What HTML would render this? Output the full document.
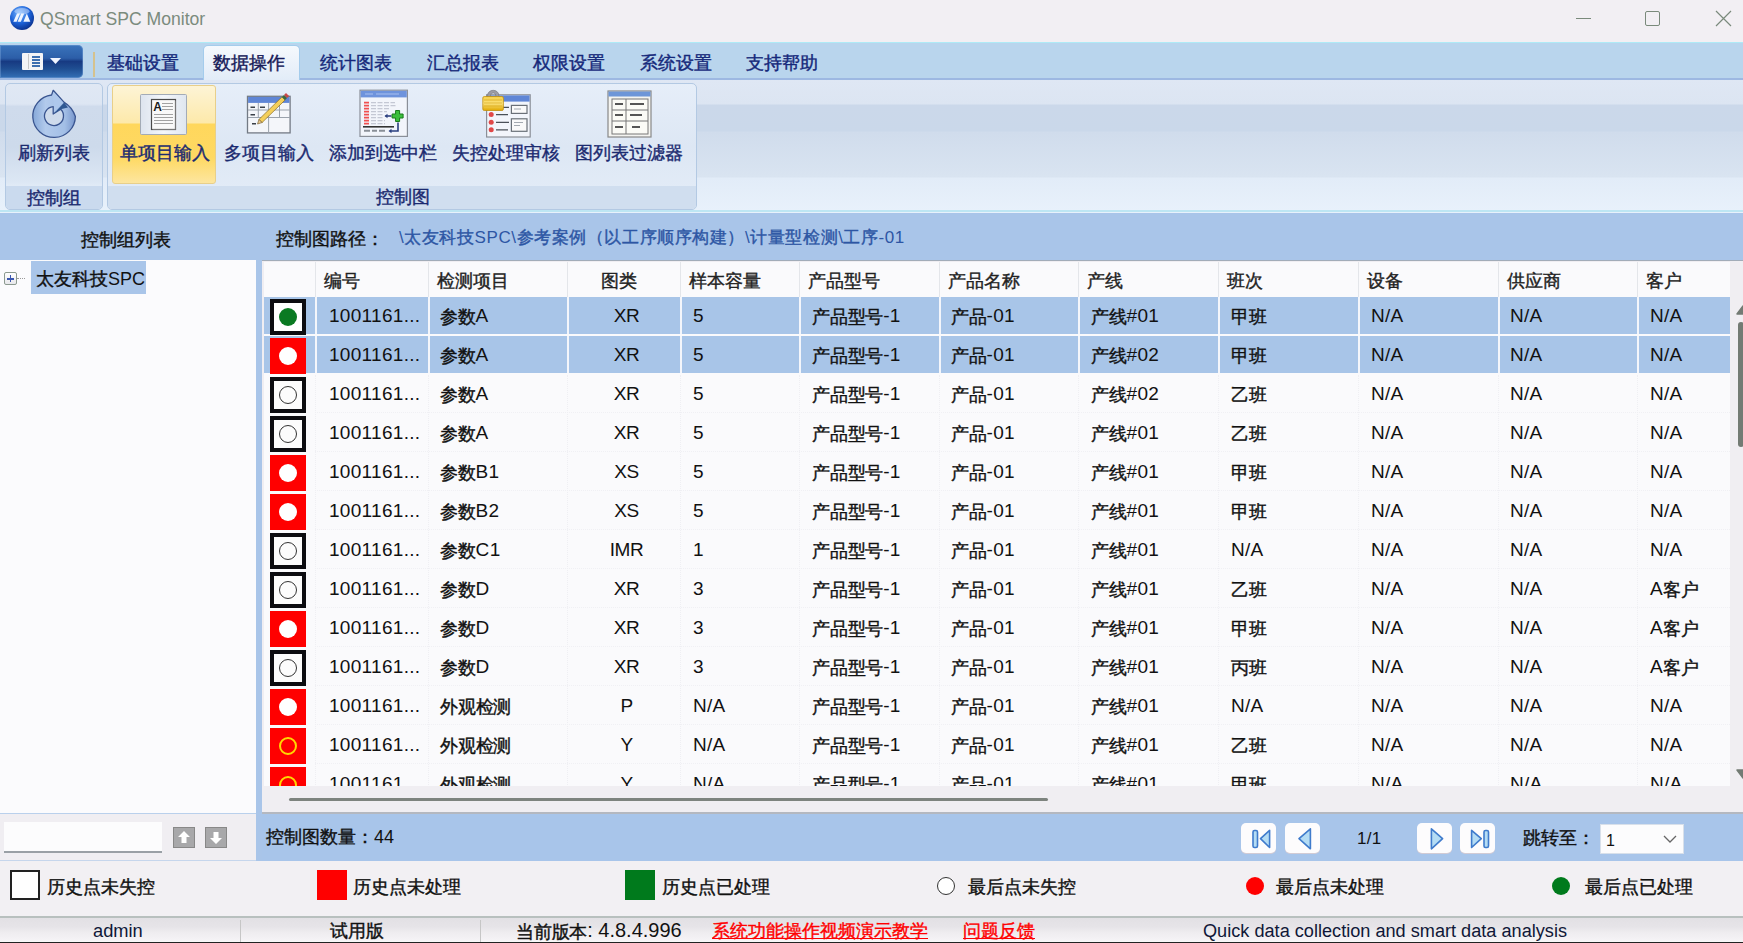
<!DOCTYPE html>
<html><head><meta charset="utf-8">
<style>
*{box-sizing:border-box;margin:0;padding:0}
html,body{width:1743px;height:943px;overflow:hidden;background:#f1eef2;font-family:"Liberation Sans",sans-serif;color:#111}
.a{position:absolute}
.t{position:absolute;white-space:nowrap;line-height:1}
.tab{font-size:18px;color:#15287a}
.rb{font-size:18px;color:#1b2a70;font-weight:500}
.cj{font-weight:500}
.gc{font-size:19px;color:#111;font-weight:500;letter-spacing:0.3px}
.gh{font-size:18px;color:#222;font-weight:500}
.c{-webkit-text-stroke:0.4px currentColor}
.gc .c{font-size:18px;letter-spacing:-0.2px;position:relative;top:1px}
</style></head><body>
<div class="a" style="left:0;top:0;width:1743px;height:42px;background:#f2eff3"></div>
<svg class="a" style="left:10px;top:6px" width="24" height="24" viewBox="0 0 24 24">
<defs><radialGradient id="gb" cx="0.4" cy="0.3" r="0.75"><stop offset="0" stop-color="#7ab8ff"/><stop offset="0.55" stop-color="#1d62d8"/><stop offset="1" stop-color="#0a2c86"/></radialGradient></defs>
<circle cx="12" cy="12" r="12" fill="url(#gb)"/>
<ellipse cx="12" cy="5.2" rx="7.5" ry="3.2" fill="#dfeaff" opacity="0.45"/>
<path d="M3.3 15.8 L6.6 15.8 L10 7.5 L7 7.5Z M7.6 15.8 L10.9 15.8 L14.2 7.5 L11.2 7.5Z M13.4 15.8 L20.3 15.8 L16.8 7.5Z" fill="#eef4ff"/>
</svg>
<div class="t" style="left:40px;top:11px;font-size:17.6px;color:#7b8b7d">QSmart SPC Monitor</div>
<div class="a" style="left:1576px;top:18px;width:15px;height:1px;background:#7a8a7b"></div>
<div class="a" style="left:1645px;top:11px;width:15px;height:15px;border:1.3px solid #7a8a7b;border-radius:2px"></div>
<svg class="a" style="left:1715px;top:10px" width="17" height="17"><path d="M1 1L16 16M16 1L1 16" stroke="#7a8a7b" stroke-width="1.2"/></svg>
<div class="a" style="left:0;top:42px;width:1743px;height:38px;background:#b9d5ed;border-top:1px solid #aeeaf6;border-bottom:2px solid #9db8e2"></div>
<div class="a" style="left:0;top:45px;width:83px;height:33px;background:linear-gradient(#3a74bc 0,#2c5ea8 40%,#173a82 50%,#1f4e92 72%,#3470b6 100%);border-radius:0 5px 5px 0;box-shadow:inset 0 0 0 1px rgba(140,180,230,0.35)"></div>
<div class="a" style="left:22px;top:53px;width:21px;height:17px;background:#f4f4f6;border-radius:1px"></div>
<div class="a" style="left:28px;top:54px;width:1px;height:15px;background:#c8c8c8"></div>
<div class="a" style="left:32px;top:56px;width:8px;height:11px;background:repeating-linear-gradient(#3d6fb0 0 1.5px,transparent 1.5px 3px)"></div>
<svg class="a" style="left:50px;top:58px" width="11" height="7"><path d="M0 0H11L5.5 6Z" fill="#f0f4ff"/></svg>
<div class="a" style="left:93px;top:52px;width:2px;height:25px;background:#d5c28e"></div>
<div class="a" style="left:203px;top:45px;width:97px;height:35px;background:linear-gradient(#f5f9fd,#e2ecf8);border:1.5px solid #a4ccec;border-bottom:none;border-radius:5px 5px 0 0"></div>
<div class="t tab cj" style="left:107px;top:54px"><span class="c">基础设置</span></div>
<div class="t tab cj" style="left:213px;top:54px;color:#161a58"><span class="c">数据操作</span></div>
<div class="t tab cj" style="left:320px;top:54px"><span class="c">统计图表</span></div>
<div class="t tab cj" style="left:427px;top:54px"><span class="c">汇总报表</span></div>
<div class="t tab cj" style="left:533px;top:54px"><span class="c">权限设置</span></div>
<div class="t tab cj" style="left:640px;top:54px"><span class="c">系统设置</span></div>
<div class="t tab cj" style="left:746px;top:54px"><span class="c">支持帮助</span></div>
<div class="a" style="left:0;top:80px;width:1743px;height:133px;background:linear-gradient(#dfe7f4 0px,#dce5f2 24px,#cbd8ea 25px,#cad8ea 51px,#d0dcec 52px,#d9e4f1 97px,#e2ecf8 98px,#e8f1fb 131px)"></div>
<div class="a" style="left:0;top:210px;width:1743px;height:2px;background:#bde6f3"></div>
<div class="a" style="left:5px;top:83px;width:98px;height:127px;background:linear-gradient(#e0e8f4 0,#dde6f3 16%,#cfdbec 18%,#cddaeb 50%,#dce7f4 78%,#e0eaf6 81%);border:1px solid #b3c9e3;border-radius:5px"></div>
<div class="a" style="left:6px;top:186px;width:96px;height:23px;background:#cadaee;border-radius:0 0 4px 4px"></div>
<div class="a" style="left:107px;top:83px;width:590px;height:127px;background:linear-gradient(#e6eef9,#dde7f4 50%,#e4edf8 100%);border:1px solid #b3c9e3;border-radius:5px"></div>
<div class="a" style="left:108px;top:186px;width:588px;height:23px;background:#d0deef;border-radius:0 0 4px 4px"></div>
<div class="a" style="left:112px;top:85px;width:104px;height:99px;background:linear-gradient(#fdf4d6 0px,#fde9aa 37px,#ffd75c 38px,#fed963 72px,#fde6a2 98px);border:1px solid #e8cf8a;border-radius:3px"></div>
<div class="t rb" style="left:18px;top:144px"><span class="c">刷新列表</span></div>
<div class="t rb" style="left:120px;top:144px"><span class="c">单项目输入</span></div>
<div class="t rb" style="left:224px;top:144px"><span class="c">多项目输入</span></div>
<div class="t rb" style="left:329px;top:144px"><span class="c">添加到选中栏</span></div>
<div class="t rb" style="left:452px;top:144px"><span class="c">失控处理审核</span></div>
<div class="t rb" style="left:575px;top:144px"><span class="c">图列表过滤器</span></div>
<div class="t rb" style="left:27px;top:189px"><span class="c">控制组</span></div>
<div class="t rb" style="left:376px;top:188px"><span class="c">控制图</span></div>
<svg class="a" style="left:30px;top:88px" width="50" height="52" viewBox="0 0 50 52">
<defs><linearGradient id="rf" x1="0" y1="0" x2="1" y2="0"><stop offset="0" stop-color="#86a8d8"/><stop offset="0.3" stop-color="#b2caec"/><stop offset="0.75" stop-color="#a3bfe6"/><stop offset="1" stop-color="#7896cc"/></linearGradient></defs>
<path fill-rule="evenodd" d="M34.2 14.4 Q42 19 45.4 28.5 A21.3 21.3 0 1 1 21.6 7 L23.2 2.3 Z M23.2 18.55 L23.2 26 L30.7 21.3 A9.5 9.5 0 1 1 23.2 18.55Z" fill="url(#rf)" stroke="#3a5590" stroke-width="1.3" stroke-linejoin="round"/>
<path d="M23.6 4 L33 14.4 L24 24 L24 18 L22.6 7.5 Z" fill="#aec8ec"/>
<path d="M34.2 14.4 L23.8 25.4 L30.7 21.3 L38 19.5 Z" fill="#2f5892"/>
</svg>
<svg class="a" style="left:140px;top:94px" width="47" height="41" viewBox="0 0 47 41">
<defs><linearGradient id="fr" x1="0" y1="0" x2="1" y2="0"><stop offset="0" stop-color="#dde4ee"/><stop offset="0.5" stop-color="#f4f7fb"/><stop offset="1" stop-color="#dfe6ef"/></linearGradient></defs>
<rect x="0.5" y="0.5" width="46" height="40" rx="1" fill="url(#fr)" stroke="#a3abb6"/>
<rect x="11.5" y="5.5" width="24" height="30" fill="#f9f9f9" stroke="#4a4a4a" stroke-width="1.2"/>
<path d="M12.5 35.5H35.5V6.5" stroke="#777" stroke-width="1" fill="none"/>
<text x="13.2" y="17" font-family="Liberation Sans" font-weight="bold" font-size="12" fill="#1a1a1a">A</text>
<path d="M22 9.5H33M22 12.5H33M22 15.5H33M14 20.5H33M14 23.5H33M14 26.5H33M14 29.5H33" stroke="#8c8c8c" stroke-width="0.8"/>
</svg>
<svg class="a" style="left:246px;top:91px" width="46" height="44" viewBox="0 0 46 44">
<rect x="1.5" y="5.3" width="42.6" height="36.6" fill="#f4f6fa" stroke="#737a84" stroke-width="1.3"/>
<rect x="2.1" y="5.9" width="41.4" height="6" fill="#5f86d6"/>
<path d="M2 19H44M2 26.5H44M12.3 12V26.5M33.5 12V26.5M22.6 12V42" stroke="#9aa2ac" stroke-width="1"/>
<path d="M4.5 16.2H9M14 16.2H19M4.5 23.7H9M6 32.7H10" stroke="#3a4048" stroke-width="1.5"/>
<path d="M12.95 28.44 L35.95 5.94 L39.05 9.06 L16.05 31.56Z" fill="#f4cf5a" stroke="#8a6a20" stroke-width="0.7"/>
<path d="M12.95 28.44 L16.05 31.56 L11.5 33Z" fill="#e8c890" stroke="#6a5020" stroke-width="0.6"/>
<path d="M35.95 5.94 L38 3.9 L41.1 7 L39.05 9.06Z" fill="#3a6a40"/>
<path d="M38 3.9 L40 1.9 L43.1 5 L41.1 7Z" fill="#c84848"/>
</svg>
<svg class="a" style="left:359px;top:89px" width="50" height="49" viewBox="0 0 50 49">
<rect x="1" y="1.2" width="47.4" height="46.2" fill="#f2f5fb" stroke="#8a8f98" stroke-width="1.2"/>
<rect x="1.6" y="1.8" width="46.2" height="6.6" fill="#6e93dc"/>
<path d="M6 5H14M17 5H40" stroke="#a8c0f0" stroke-width="1"/>
<path d="M5 13.6H10M5 16.6H10M5 19.6H10M5 22.6H10M5 25.6H10M5 28.6H10M5 31.6H10M5 34.6H10" stroke="#f05050" stroke-width="1.6"/>
<path d="M12 13.6H36M12 16.6H37M12 19.6H30M12 22.6H28M12 25.6H24M12 28.6H24M12 31.6H26M12 34.6H26" stroke="#c4c8d4" stroke-width="1.3" stroke-dasharray="5 1.5"/>
<path d="M4 37.8H35" stroke="#333" stroke-width="1.6"/>
<path d="M5 41.8H11M13 41.8H18M20 41.8H26" stroke="#8a9098" stroke-width="2"/>
<path d="M26.5 27H32.5" stroke="#2a3f80" stroke-width="1.6"/>
<path d="M25.5 27L28.5 24.8V29.2Z" fill="#2a3f80"/>
<path d="M39 33.5V42H31" stroke="#2a3f80" stroke-width="1.6" fill="none"/>
<path d="M29.5 42L32.5 39.8V44.2Z" fill="#2a3f80"/>
<path d="M36.6 21.5H40.6V25H44.1V29H40.6V32.5H36.6V29H33.1V25H36.6Z" fill="#3cbf3c" stroke="#1a7a1a" stroke-width="1"/>
</svg>
<svg class="a" style="left:481px;top:89px" width="51" height="50" viewBox="0 0 51 50">
<defs><linearGradient id="lk" x1="0" y1="0" x2="0" y2="1"><stop offset="0" stop-color="#f6d04a"/><stop offset="0.5" stop-color="#fbe27a"/><stop offset="1" stop-color="#e0a800"/></linearGradient></defs>
<rect x="5.6" y="5.8" width="43.6" height="42.2" fill="#f2f5fb" stroke="#8a8f98" stroke-width="1.2"/>
<rect x="6.2" y="6.4" width="42.4" height="6.2" fill="#5f86d6"/>
<circle cx="10.2" cy="25.6" r="2.5" fill="#e04848"/><circle cx="10.2" cy="33.3" r="2.5" fill="#e04848"/><circle cx="10.2" cy="40.8" r="2.5" fill="#e04848"/>
<path d="M15 18.4H28M15 25.6H27M15 33.3H28M15 40.8H27" stroke="#4a5058" stroke-width="1.3"/>
<rect x="30.4" y="16.4" width="15.6" height="8" fill="#fafafa" stroke="#6a7078" stroke-width="1.2"/>
<rect x="30.4" y="29.8" width="15.6" height="12.5" fill="#fafafa" stroke="#6a7078" stroke-width="1.2"/>
<path d="M33 20H40M33 33.5H42M33 36.5H39" stroke="#9aa0a8" stroke-width="0.9"/>
<path d="M6.6 9 V6.2 A5.6 4.9 0 0 1 17.8 6.2 V9 H14.8 V6.2 A2.6 2.2 0 0 0 9.6 6.2 V9Z" fill="#9c9ca4" stroke="#707078" stroke-width="0.6"/>
<rect x="1.8" y="7.5" width="20.6" height="14" rx="1.5" fill="url(#lk)" stroke="#c09010" stroke-width="0.8"/>
<path d="M3 11H21M3 14H21M3 17H21" stroke="#d8a818" stroke-width="0.7"/>
</svg>
<svg class="a" style="left:607px;top:90px" width="45" height="48" viewBox="0 0 45 48">
<rect x="1" y="1" width="43" height="46" fill="#f4f4f0" stroke="#888" stroke-width="1.2"/>
<rect x="1.5" y="1.5" width="42" height="5" fill="#6d96d8"/>
<rect x="5" y="9" width="36" height="35" fill="#fbfbf6" stroke="#777"/>
<path d="M5 20H41M5 31H41M19 9V44" stroke="#777" stroke-width="1"/>
<path d="M8 14H16M23 14H37M8 25H16M23 25H35M8 37H16M25 37H33" stroke="#555" stroke-width="2"/>
</svg>
<div class="a" style="left:0;top:213px;width:1743px;height:47px;background:#a9c5e9"></div>
<div class="t gh" style="left:81px;top:231px;color:#111"><span class="c">控制组列表</span></div>
<div class="t gh" style="left:276px;top:230px;color:#111"><span class="c">控制图路径：</span></div>
<div class="t" style="left:399px;top:229px;font-size:17px;letter-spacing:0.57px;color:#2d56a4">\<span class="c">太友科技</span>SPC\<span class="c">参考案例（以工序顺序构建）</span>\<span class="c">计量型检测</span>\<span class="c">工序</span>-01</div>
<div class="a" style="left:0;top:260px;width:256px;height:554px;background:#fbfbfd"></div>
<div class="a" style="left:0;top:813px;width:256px;height:1px;background:#b9d0ec"></div>
<div class="a" style="left:4px;top:272px;width:13px;height:13px;border:1px solid #8c9a90;border-radius:2px;background:linear-gradient(#fff,#e8e8ec)"></div>
<div class="a" style="left:7px;top:278px;width:7px;height:1.5px;background:#3a56b0"></div>
<div class="a" style="left:9.8px;top:275px;width:1.5px;height:7px;background:#3a56b0"></div>
<div class="a" style="left:17px;top:278px;width:8px;height:1px;border-top:1px dotted #999"></div>
<div class="a" style="left:31px;top:261px;width:115px;height:33px;background:#a9c5e9"></div>
<div class="t gh" style="left:36px;top:270px;color:#111"><span class="c">太友科技</span>SPC</div>
<div class="a" style="left:256px;top:260px;width:6px;height:601px;background:#a9c5e9"></div>
<div class="a" style="left:262px;top:260px;width:1481px;height:552px;background:#f0eef2"></div>
<div class="a" style="left:264px;top:262px;width:1466px;height:524px;background:#fafafc"></div>
<div class="a" style="left:262px;top:260px;width:1481px;height:1px;background:#a2acb8"></div>
<div class="t gh" style="left:324px;top:272px"><span class="c">编号</span></div>
<div class="a" style="left:315px;top:262px;width:1px;height:35px;background:#e4e6ea"></div>
<div class="t gh" style="left:437px;top:272px"><span class="c">检测项目</span></div>
<div class="a" style="left:428px;top:262px;width:1px;height:35px;background:#e4e6ea"></div>
<div class="t gh" style="left:601px;top:272px"><span class="c">图类</span></div>
<div class="a" style="left:567px;top:262px;width:1px;height:35px;background:#e4e6ea"></div>
<div class="t gh" style="left:689px;top:272px"><span class="c">样本容量</span></div>
<div class="a" style="left:680px;top:262px;width:1px;height:35px;background:#e4e6ea"></div>
<div class="t gh" style="left:808px;top:272px"><span class="c">产品型号</span></div>
<div class="a" style="left:799px;top:262px;width:1px;height:35px;background:#e4e6ea"></div>
<div class="t gh" style="left:948px;top:272px"><span class="c">产品名称</span></div>
<div class="a" style="left:939px;top:262px;width:1px;height:35px;background:#e4e6ea"></div>
<div class="t gh" style="left:1087px;top:272px"><span class="c">产线</span></div>
<div class="a" style="left:1078px;top:262px;width:1px;height:35px;background:#e4e6ea"></div>
<div class="t gh" style="left:1227px;top:272px"><span class="c">班次</span></div>
<div class="a" style="left:1218px;top:262px;width:1px;height:35px;background:#e4e6ea"></div>
<div class="t gh" style="left:1367px;top:272px"><span class="c">设备</span></div>
<div class="a" style="left:1358px;top:262px;width:1px;height:35px;background:#e4e6ea"></div>
<div class="t gh" style="left:1507px;top:272px"><span class="c">供应商</span></div>
<div class="a" style="left:1498px;top:262px;width:1px;height:35px;background:#e4e6ea"></div>
<div class="t gh" style="left:1646px;top:272px"><span class="c">客户</span></div>
<div class="a" style="left:1637px;top:262px;width:1px;height:35px;background:#e4e6ea"></div>
<div class="a" style="left:264px;top:297px;width:1466px;height:489px;overflow:hidden">
<div class="a" style="left:0;top:0px;width:1466px;height:37px;background:#a8c5e8"></div>
<div class="a" style="left:51px;top:0px;width:2px;height:37px;background:#f4f6fb"></div>
<div class="a" style="left:164px;top:0px;width:2px;height:37px;background:#f4f6fb"></div>
<div class="a" style="left:303px;top:0px;width:2px;height:37px;background:#f4f6fb"></div>
<div class="a" style="left:416px;top:0px;width:2px;height:37px;background:#f4f6fb"></div>
<div class="a" style="left:535px;top:0px;width:2px;height:37px;background:#f4f6fb"></div>
<div class="a" style="left:675px;top:0px;width:2px;height:37px;background:#f4f6fb"></div>
<div class="a" style="left:814px;top:0px;width:2px;height:37px;background:#f4f6fb"></div>
<div class="a" style="left:954px;top:0px;width:2px;height:37px;background:#f4f6fb"></div>
<div class="a" style="left:1094px;top:0px;width:2px;height:37px;background:#f4f6fb"></div>
<div class="a" style="left:1234px;top:0px;width:2px;height:37px;background:#f4f6fb"></div>
<div class="a" style="left:1373px;top:0px;width:2px;height:37px;background:#f4f6fb"></div>
<div class="a" style="left:6px;top:2px;width:36px;height:36px;border:4px solid #0c0c10;background:#fff"></div><div class="a" style="left:15px;top:11px;width:18px;height:18px;border-radius:50%;background:#0a7a22"></div>
<div class="t gc" style="left:65px;top:9px">1001161...</div>
<div class="t gc" style="left:176px;top:9px"><span class="c">参数</span>A</div>
<div class="t gc" style="left:306px;width:113px;text-align:center;letter-spacing:-0.5px;top:9px">XR</div>
<div class="t gc" style="left:429px;top:9px">5</div>
<div class="t gc" style="left:548px;top:9px"><span class="c">产品型号</span>-1</div>
<div class="t gc" style="left:687px;top:9px"><span class="c">产品</span>-01</div>
<div class="t gc" style="left:827px;top:9px"><span class="c">产线</span>#01</div>
<div class="t gc" style="left:967px;top:9px"><span class="c">甲班</span></div>
<div class="t gc" style="left:1107px;top:9px">N/A</div>
<div class="t gc" style="left:1246px;top:9px">N/A</div>
<div class="t gc" style="left:1386px;top:9px">N/A</div>
<div class="a" style="left:0;top:39px;width:1466px;height:37px;background:#a8c5e8"></div>
<div class="a" style="left:51px;top:39px;width:2px;height:37px;background:#f4f6fb"></div>
<div class="a" style="left:164px;top:39px;width:2px;height:37px;background:#f4f6fb"></div>
<div class="a" style="left:303px;top:39px;width:2px;height:37px;background:#f4f6fb"></div>
<div class="a" style="left:416px;top:39px;width:2px;height:37px;background:#f4f6fb"></div>
<div class="a" style="left:535px;top:39px;width:2px;height:37px;background:#f4f6fb"></div>
<div class="a" style="left:675px;top:39px;width:2px;height:37px;background:#f4f6fb"></div>
<div class="a" style="left:814px;top:39px;width:2px;height:37px;background:#f4f6fb"></div>
<div class="a" style="left:954px;top:39px;width:2px;height:37px;background:#f4f6fb"></div>
<div class="a" style="left:1094px;top:39px;width:2px;height:37px;background:#f4f6fb"></div>
<div class="a" style="left:1234px;top:39px;width:2px;height:37px;background:#f4f6fb"></div>
<div class="a" style="left:1373px;top:39px;width:2px;height:37px;background:#f4f6fb"></div>
<div class="a" style="left:6px;top:41px;width:36px;height:36px;background:#ff0000"></div><div class="a" style="left:15px;top:50px;width:18px;height:18px;border-radius:50%;background:#fff"></div>
<div class="t gc" style="left:65px;top:48px">1001161...</div>
<div class="t gc" style="left:176px;top:48px"><span class="c">参数</span>A</div>
<div class="t gc" style="left:306px;width:113px;text-align:center;letter-spacing:-0.5px;top:48px">XR</div>
<div class="t gc" style="left:429px;top:48px">5</div>
<div class="t gc" style="left:548px;top:48px"><span class="c">产品型号</span>-1</div>
<div class="t gc" style="left:687px;top:48px"><span class="c">产品</span>-01</div>
<div class="t gc" style="left:827px;top:48px"><span class="c">产线</span>#02</div>
<div class="t gc" style="left:967px;top:48px"><span class="c">甲班</span></div>
<div class="t gc" style="left:1107px;top:48px">N/A</div>
<div class="t gc" style="left:1246px;top:48px">N/A</div>
<div class="t gc" style="left:1386px;top:48px">N/A</div>
<div class="a" style="left:51px;top:115px;width:1415px;height:1px;border-top:1px dotted #f0f0f4"></div>
<div class="a" style="left:6px;top:80px;width:36px;height:36px;border:4px solid #0c0c10;background:#fcfcfc"></div><div class="a" style="left:15px;top:89px;width:18px;height:18px;border-radius:50%;border:1.6px solid #333"></div>
<div class="t gc" style="left:65px;top:87px">1001161...</div>
<div class="t gc" style="left:176px;top:87px"><span class="c">参数</span>A</div>
<div class="t gc" style="left:306px;width:113px;text-align:center;letter-spacing:-0.5px;top:87px">XR</div>
<div class="t gc" style="left:429px;top:87px">5</div>
<div class="t gc" style="left:548px;top:87px"><span class="c">产品型号</span>-1</div>
<div class="t gc" style="left:687px;top:87px"><span class="c">产品</span>-01</div>
<div class="t gc" style="left:827px;top:87px"><span class="c">产线</span>#02</div>
<div class="t gc" style="left:967px;top:87px"><span class="c">乙班</span></div>
<div class="t gc" style="left:1107px;top:87px">N/A</div>
<div class="t gc" style="left:1246px;top:87px">N/A</div>
<div class="t gc" style="left:1386px;top:87px">N/A</div>
<div class="a" style="left:51px;top:154px;width:1415px;height:1px;border-top:1px dotted #f0f0f4"></div>
<div class="a" style="left:6px;top:119px;width:36px;height:36px;border:4px solid #0c0c10;background:#fcfcfc"></div><div class="a" style="left:15px;top:128px;width:18px;height:18px;border-radius:50%;border:1.6px solid #333"></div>
<div class="t gc" style="left:65px;top:126px">1001161...</div>
<div class="t gc" style="left:176px;top:126px"><span class="c">参数</span>A</div>
<div class="t gc" style="left:306px;width:113px;text-align:center;letter-spacing:-0.5px;top:126px">XR</div>
<div class="t gc" style="left:429px;top:126px">5</div>
<div class="t gc" style="left:548px;top:126px"><span class="c">产品型号</span>-1</div>
<div class="t gc" style="left:687px;top:126px"><span class="c">产品</span>-01</div>
<div class="t gc" style="left:827px;top:126px"><span class="c">产线</span>#01</div>
<div class="t gc" style="left:967px;top:126px"><span class="c">乙班</span></div>
<div class="t gc" style="left:1107px;top:126px">N/A</div>
<div class="t gc" style="left:1246px;top:126px">N/A</div>
<div class="t gc" style="left:1386px;top:126px">N/A</div>
<div class="a" style="left:51px;top:193px;width:1415px;height:1px;border-top:1px dotted #f0f0f4"></div>
<div class="a" style="left:6px;top:158px;width:36px;height:36px;background:#ff0000"></div><div class="a" style="left:15px;top:167px;width:18px;height:18px;border-radius:50%;background:#fff"></div>
<div class="t gc" style="left:65px;top:165px">1001161...</div>
<div class="t gc" style="left:176px;top:165px"><span class="c">参数</span>B1</div>
<div class="t gc" style="left:306px;width:113px;text-align:center;letter-spacing:-0.5px;top:165px">XS</div>
<div class="t gc" style="left:429px;top:165px">5</div>
<div class="t gc" style="left:548px;top:165px"><span class="c">产品型号</span>-1</div>
<div class="t gc" style="left:687px;top:165px"><span class="c">产品</span>-01</div>
<div class="t gc" style="left:827px;top:165px"><span class="c">产线</span>#01</div>
<div class="t gc" style="left:967px;top:165px"><span class="c">甲班</span></div>
<div class="t gc" style="left:1107px;top:165px">N/A</div>
<div class="t gc" style="left:1246px;top:165px">N/A</div>
<div class="t gc" style="left:1386px;top:165px">N/A</div>
<div class="a" style="left:51px;top:232px;width:1415px;height:1px;border-top:1px dotted #f0f0f4"></div>
<div class="a" style="left:6px;top:197px;width:36px;height:36px;background:#ff0000"></div><div class="a" style="left:15px;top:206px;width:18px;height:18px;border-radius:50%;background:#fff"></div>
<div class="t gc" style="left:65px;top:204px">1001161...</div>
<div class="t gc" style="left:176px;top:204px"><span class="c">参数</span>B2</div>
<div class="t gc" style="left:306px;width:113px;text-align:center;letter-spacing:-0.5px;top:204px">XS</div>
<div class="t gc" style="left:429px;top:204px">5</div>
<div class="t gc" style="left:548px;top:204px"><span class="c">产品型号</span>-1</div>
<div class="t gc" style="left:687px;top:204px"><span class="c">产品</span>-01</div>
<div class="t gc" style="left:827px;top:204px"><span class="c">产线</span>#01</div>
<div class="t gc" style="left:967px;top:204px"><span class="c">甲班</span></div>
<div class="t gc" style="left:1107px;top:204px">N/A</div>
<div class="t gc" style="left:1246px;top:204px">N/A</div>
<div class="t gc" style="left:1386px;top:204px">N/A</div>
<div class="a" style="left:51px;top:271px;width:1415px;height:1px;border-top:1px dotted #f0f0f4"></div>
<div class="a" style="left:6px;top:236px;width:36px;height:36px;border:4px solid #0c0c10;background:#fcfcfc"></div><div class="a" style="left:15px;top:245px;width:18px;height:18px;border-radius:50%;border:1.6px solid #333"></div>
<div class="t gc" style="left:65px;top:243px">1001161...</div>
<div class="t gc" style="left:176px;top:243px"><span class="c">参数</span>C1</div>
<div class="t gc" style="left:306px;width:113px;text-align:center;letter-spacing:-0.5px;top:243px">IMR</div>
<div class="t gc" style="left:429px;top:243px">1</div>
<div class="t gc" style="left:548px;top:243px"><span class="c">产品型号</span>-1</div>
<div class="t gc" style="left:687px;top:243px"><span class="c">产品</span>-01</div>
<div class="t gc" style="left:827px;top:243px"><span class="c">产线</span>#01</div>
<div class="t gc" style="left:967px;top:243px">N/A</div>
<div class="t gc" style="left:1107px;top:243px">N/A</div>
<div class="t gc" style="left:1246px;top:243px">N/A</div>
<div class="t gc" style="left:1386px;top:243px">N/A</div>
<div class="a" style="left:51px;top:310px;width:1415px;height:1px;border-top:1px dotted #f0f0f4"></div>
<div class="a" style="left:6px;top:275px;width:36px;height:36px;border:4px solid #0c0c10;background:#fcfcfc"></div><div class="a" style="left:15px;top:284px;width:18px;height:18px;border-radius:50%;border:1.6px solid #333"></div>
<div class="t gc" style="left:65px;top:282px">1001161...</div>
<div class="t gc" style="left:176px;top:282px"><span class="c">参数</span>D</div>
<div class="t gc" style="left:306px;width:113px;text-align:center;letter-spacing:-0.5px;top:282px">XR</div>
<div class="t gc" style="left:429px;top:282px">3</div>
<div class="t gc" style="left:548px;top:282px"><span class="c">产品型号</span>-1</div>
<div class="t gc" style="left:687px;top:282px"><span class="c">产品</span>-01</div>
<div class="t gc" style="left:827px;top:282px"><span class="c">产线</span>#01</div>
<div class="t gc" style="left:967px;top:282px"><span class="c">乙班</span></div>
<div class="t gc" style="left:1107px;top:282px">N/A</div>
<div class="t gc" style="left:1246px;top:282px">N/A</div>
<div class="t gc" style="left:1386px;top:282px">A<span class="c">客户</span></div>
<div class="a" style="left:51px;top:349px;width:1415px;height:1px;border-top:1px dotted #f0f0f4"></div>
<div class="a" style="left:6px;top:314px;width:36px;height:36px;background:#ff0000"></div><div class="a" style="left:15px;top:323px;width:18px;height:18px;border-radius:50%;background:#fff"></div>
<div class="t gc" style="left:65px;top:321px">1001161...</div>
<div class="t gc" style="left:176px;top:321px"><span class="c">参数</span>D</div>
<div class="t gc" style="left:306px;width:113px;text-align:center;letter-spacing:-0.5px;top:321px">XR</div>
<div class="t gc" style="left:429px;top:321px">3</div>
<div class="t gc" style="left:548px;top:321px"><span class="c">产品型号</span>-1</div>
<div class="t gc" style="left:687px;top:321px"><span class="c">产品</span>-01</div>
<div class="t gc" style="left:827px;top:321px"><span class="c">产线</span>#01</div>
<div class="t gc" style="left:967px;top:321px"><span class="c">甲班</span></div>
<div class="t gc" style="left:1107px;top:321px">N/A</div>
<div class="t gc" style="left:1246px;top:321px">N/A</div>
<div class="t gc" style="left:1386px;top:321px">A<span class="c">客户</span></div>
<div class="a" style="left:51px;top:388px;width:1415px;height:1px;border-top:1px dotted #f0f0f4"></div>
<div class="a" style="left:6px;top:353px;width:36px;height:36px;border:4px solid #0c0c10;background:#fcfcfc"></div><div class="a" style="left:15px;top:362px;width:18px;height:18px;border-radius:50%;border:1.6px solid #333"></div>
<div class="t gc" style="left:65px;top:360px">1001161...</div>
<div class="t gc" style="left:176px;top:360px"><span class="c">参数</span>D</div>
<div class="t gc" style="left:306px;width:113px;text-align:center;letter-spacing:-0.5px;top:360px">XR</div>
<div class="t gc" style="left:429px;top:360px">3</div>
<div class="t gc" style="left:548px;top:360px"><span class="c">产品型号</span>-1</div>
<div class="t gc" style="left:687px;top:360px"><span class="c">产品</span>-01</div>
<div class="t gc" style="left:827px;top:360px"><span class="c">产线</span>#01</div>
<div class="t gc" style="left:967px;top:360px"><span class="c">丙班</span></div>
<div class="t gc" style="left:1107px;top:360px">N/A</div>
<div class="t gc" style="left:1246px;top:360px">N/A</div>
<div class="t gc" style="left:1386px;top:360px">A<span class="c">客户</span></div>
<div class="a" style="left:51px;top:427px;width:1415px;height:1px;border-top:1px dotted #f0f0f4"></div>
<div class="a" style="left:6px;top:392px;width:36px;height:36px;background:#ff0000"></div><div class="a" style="left:15px;top:401px;width:18px;height:18px;border-radius:50%;background:#fff"></div>
<div class="t gc" style="left:65px;top:399px">1001161...</div>
<div class="t gc" style="left:176px;top:399px"><span class="c">外观检测</span></div>
<div class="t gc" style="left:306px;width:113px;text-align:center;letter-spacing:-0.5px;top:399px">P</div>
<div class="t gc" style="left:429px;top:399px">N/A</div>
<div class="t gc" style="left:548px;top:399px"><span class="c">产品型号</span>-1</div>
<div class="t gc" style="left:687px;top:399px"><span class="c">产品</span>-01</div>
<div class="t gc" style="left:827px;top:399px"><span class="c">产线</span>#01</div>
<div class="t gc" style="left:967px;top:399px">N/A</div>
<div class="t gc" style="left:1107px;top:399px">N/A</div>
<div class="t gc" style="left:1246px;top:399px">N/A</div>
<div class="t gc" style="left:1386px;top:399px">N/A</div>
<div class="a" style="left:51px;top:466px;width:1415px;height:1px;border-top:1px dotted #f0f0f4"></div>
<div class="a" style="left:6px;top:431px;width:36px;height:36px;background:#ff0000"></div><div class="a" style="left:15px;top:440px;width:18px;height:18px;border-radius:50%;border:2px solid #ffd800"></div>
<div class="t gc" style="left:65px;top:438px">1001161...</div>
<div class="t gc" style="left:176px;top:438px"><span class="c">外观检测</span></div>
<div class="t gc" style="left:306px;width:113px;text-align:center;letter-spacing:-0.5px;top:438px">Y</div>
<div class="t gc" style="left:429px;top:438px">N/A</div>
<div class="t gc" style="left:548px;top:438px"><span class="c">产品型号</span>-1</div>
<div class="t gc" style="left:687px;top:438px"><span class="c">产品</span>-01</div>
<div class="t gc" style="left:827px;top:438px"><span class="c">产线</span>#01</div>
<div class="t gc" style="left:967px;top:438px"><span class="c">乙班</span></div>
<div class="t gc" style="left:1107px;top:438px">N/A</div>
<div class="t gc" style="left:1246px;top:438px">N/A</div>
<div class="t gc" style="left:1386px;top:438px">N/A</div>
<div class="a" style="left:51px;top:505px;width:1415px;height:1px;border-top:1px dotted #f0f0f4"></div>
<div class="a" style="left:6px;top:470px;width:36px;height:36px;background:#ff0000"></div><div class="a" style="left:15px;top:479px;width:18px;height:18px;border-radius:50%;border:2px solid #ffd800"></div>
<div class="t gc" style="left:65px;top:477px">1001161...</div>
<div class="t gc" style="left:176px;top:477px"><span class="c">外观检测</span></div>
<div class="t gc" style="left:306px;width:113px;text-align:center;letter-spacing:-0.5px;top:477px">Y</div>
<div class="t gc" style="left:429px;top:477px">N/A</div>
<div class="t gc" style="left:548px;top:477px"><span class="c">产品型号</span>-1</div>
<div class="t gc" style="left:687px;top:477px"><span class="c">产品</span>-01</div>
<div class="t gc" style="left:827px;top:477px"><span class="c">产线</span>#01</div>
<div class="t gc" style="left:967px;top:477px"><span class="c">甲班</span></div>
<div class="t gc" style="left:1107px;top:477px">N/A</div>
<div class="t gc" style="left:1246px;top:477px">N/A</div>
<div class="t gc" style="left:1386px;top:477px">N/A</div>
<div class="a" style="left:51px;top:78px;width:1px;height:420px;border-left:1px dotted #efeff3"></div>
<div class="a" style="left:164px;top:78px;width:1px;height:420px;border-left:1px dotted #efeff3"></div>
<div class="a" style="left:303px;top:78px;width:1px;height:420px;border-left:1px dotted #efeff3"></div>
<div class="a" style="left:416px;top:78px;width:1px;height:420px;border-left:1px dotted #efeff3"></div>
<div class="a" style="left:535px;top:78px;width:1px;height:420px;border-left:1px dotted #efeff3"></div>
<div class="a" style="left:675px;top:78px;width:1px;height:420px;border-left:1px dotted #efeff3"></div>
<div class="a" style="left:814px;top:78px;width:1px;height:420px;border-left:1px dotted #efeff3"></div>
<div class="a" style="left:954px;top:78px;width:1px;height:420px;border-left:1px dotted #efeff3"></div>
<div class="a" style="left:1094px;top:78px;width:1px;height:420px;border-left:1px dotted #efeff3"></div>
<div class="a" style="left:1234px;top:78px;width:1px;height:420px;border-left:1px dotted #efeff3"></div>
<div class="a" style="left:1373px;top:78px;width:1px;height:420px;border-left:1px dotted #efeff3"></div>
</div>
<div class="a" style="left:289px;top:798px;width:759px;height:3px;background:#7d837e;border-radius:1.5px"></div>
<div class="a" style="left:1730px;top:297px;width:13px;height:489px;background:#f0eef2"></div>
<div class="a" style="left:1738px;top:322px;width:6px;height:125px;background:#737b74;border-radius:3px"></div>
<svg class="a" style="left:1736px;top:305px" width="12" height="10"><path d="M1 9L7 1L13 9Z" fill="#737b74" stroke="#737b74" stroke-linejoin="round" stroke-width="1.5"/></svg>
<svg class="a" style="left:1736px;top:769px" width="12" height="10"><path d="M1 1L7 9L13 1Z" fill="#737b74" stroke="#737b74" stroke-linejoin="round" stroke-width="1.5"/></svg>
<div class="a" style="left:262px;top:812px;width:1481px;height:49px;background:#a8c5ea;border-top:2px solid #b4b8c0"></div>
<div class="t gh" style="left:266px;top:828px;color:#111"><span class="c">控制图数量：</span>44</div>
<div class="a" style="left:1241px;top:823px;width:35px;height:30px;background:#fdfcfd;border-radius:5px;box-shadow:0 1px 0 #d2cbd4"></div><svg class="a" style="left:1241px;top:823px" width="35" height="30"><rect x="12" y="7.5" width="4.5" height="17" rx="1.5" fill="#b4dcf4" stroke="#3f7bcc" stroke-width="1.6" stroke-linejoin="round"/><path d="M19.5 15.6 L28.6 7.3 L28.6 24.5Z" fill="#b4dcf4" stroke="#3f7bcc" stroke-width="1.6" stroke-linejoin="round"/></svg>
<div class="a" style="left:1285px;top:823px;width:35px;height:30px;background:#fdfcfd;border-radius:5px;box-shadow:0 1px 0 #d2cbd4"></div><svg class="a" style="left:1285px;top:823px" width="35" height="30"><path d="M14 15.6 L25.4 5.8 L25.4 25.8Z" fill="#b4dcf4" stroke="#3f7bcc" stroke-width="1.6" stroke-linejoin="round"/></svg>
<div class="a" style="left:1417px;top:823px;width:35px;height:30px;background:#fdfcfd;border-radius:5px;box-shadow:0 1px 0 #d2cbd4"></div><svg class="a" style="left:1417px;top:823px" width="35" height="30"><path d="M14.4 5.8 L25.6 15.6 L14.4 25.8Z" fill="#b4dcf4" stroke="#3f7bcc" stroke-width="1.6" stroke-linejoin="round"/></svg>
<div class="a" style="left:1460px;top:823px;width:35px;height:30px;background:#fdfcfd;border-radius:5px;box-shadow:0 1px 0 #d2cbd4"></div><svg class="a" style="left:1460px;top:823px" width="35" height="30"><path d="M11.6 7.3 L21.3 15.6 L11.6 24.5Z" fill="#b4dcf4" stroke="#3f7bcc" stroke-width="1.6" stroke-linejoin="round"/><rect x="24" y="7.5" width="4.5" height="17" rx="1.5" fill="#b4dcf4" stroke="#3f7bcc" stroke-width="1.6" stroke-linejoin="round"/></svg>
<div class="t gc" style="left:1357px;top:830px;font-size:17px">1/1</div>
<div class="t gh" style="left:1523px;top:829px;color:#111"><span class="c">跳转至：</span></div>
<div class="a" style="left:1600px;top:824px;width:84px;height:30px;background:#fcfcfd;border:1px solid #d8e0ea"></div>
<div class="t gc" style="left:1606px;top:833px;font-size:16px">1</div>
<svg class="a" style="left:1663px;top:835px" width="14" height="9"><path d="M1 1L7 7L13 1" stroke="#666" stroke-width="1.3" fill="none"/></svg>
<div class="a" style="left:0;top:814px;width:256px;height:47px;background:#f0eef2;border-bottom:1px solid #c6d6ec"></div>
<div class="a" style="left:4px;top:822px;width:158px;height:31px;background:#fcfcfd;border-bottom:2px solid #9aa0a6"></div>
<div class="a" style="left:173px;top:827px;width:22px;height:21px;background:#a8a8aa;border:1px solid #888"></div>
<svg class="a" style="left:173px;top:827px" width="22" height="21"><path d="M11 4L17 10H13.5V16H8.5V10H5Z" fill="#fff"/></svg>
<div class="a" style="left:205px;top:827px;width:22px;height:21px;background:#a8a8aa;border:1px solid #888"></div>
<svg class="a" style="left:205px;top:827px" width="22" height="21"><path d="M11 17L17 11H13.5V5H8.5V11H5Z" fill="#fff"/></svg>
<div class="a" style="left:0;top:861px;width:1743px;height:55px;background:#f2f0f3"></div>
<div class="a" style="left:10px;top:870px;width:30px;height:30px;border:2px solid #222;background:#fff"></div>
<div class="t gh" style="left:47px;top:878px;color:#111"><span class="c">历史点未失控</span></div>
<div class="a" style="left:317px;top:870px;width:30px;height:30px;background:#ff0000"></div>
<div class="t gh" style="left:353px;top:878px;color:#111"><span class="c">历史点未处理</span></div>
<div class="a" style="left:625px;top:870px;width:30px;height:30px;background:#007a1c"></div>
<div class="t gh" style="left:662px;top:878px;color:#111"><span class="c">历史点已处理</span></div>
<div class="a" style="left:937px;top:877px;width:18px;height:18px;border-radius:50%;border:1.6px solid #333;background:#fff"></div>
<div class="t gh" style="left:968px;top:878px;color:#111"><span class="c">最后点未失控</span></div>
<div class="a" style="left:1246px;top:877px;width:18px;height:18px;border-radius:50%;background:#ff0000"></div>
<div class="t gh" style="left:1276px;top:878px;color:#111"><span class="c">最后点未处理</span></div>
<div class="a" style="left:1552px;top:877px;width:18px;height:18px;border-radius:50%;background:#007a1c"></div>
<div class="t gh" style="left:1585px;top:878px;color:#111"><span class="c">最后点已处理</span></div>
<div class="a" style="left:0;top:916px;width:1743px;height:27px;background:linear-gradient(#e2e0e4,#e6e4e8 35%,#efedf0 60%,#f4f2f5 85%,#fafafa);border-top:2px solid #b8c0be"></div>
<div class="a" style="left:240px;top:920px;width:1px;height:23px;background:#c6c6c6"></div>
<div class="a" style="left:480px;top:920px;width:1px;height:23px;background:#c6c6c6"></div>
<div class="t" style="left:93px;top:922px;font-size:18.3px;color:#101838">admin</div>
<div class="t gh" style="left:330px;top:922px;color:#111"><span class="c">试用版</span></div>
<div class="t gc" style="left:516px;top:920px;font-size:20px;letter-spacing:0;color:#111"><span class="c">当前版本</span>: 4.8.4.996</div>
<div class="t gh" style="left:712px;top:922px;color:#f00;text-decoration:underline"><span class="c">系统功能操作视频演示教学</span></div>
<div class="t gh" style="left:963px;top:922px;color:#f00;text-decoration:underline"><span class="c">问题反馈</span></div>
<div class="t" style="left:1203px;top:922px;font-size:18.15px;color:#101838">Quick data collection and smart data analysis</div>
<div class="a" style="left:0;top:942px;width:1743px;height:1px;background:#222"></div>
</body></html>
